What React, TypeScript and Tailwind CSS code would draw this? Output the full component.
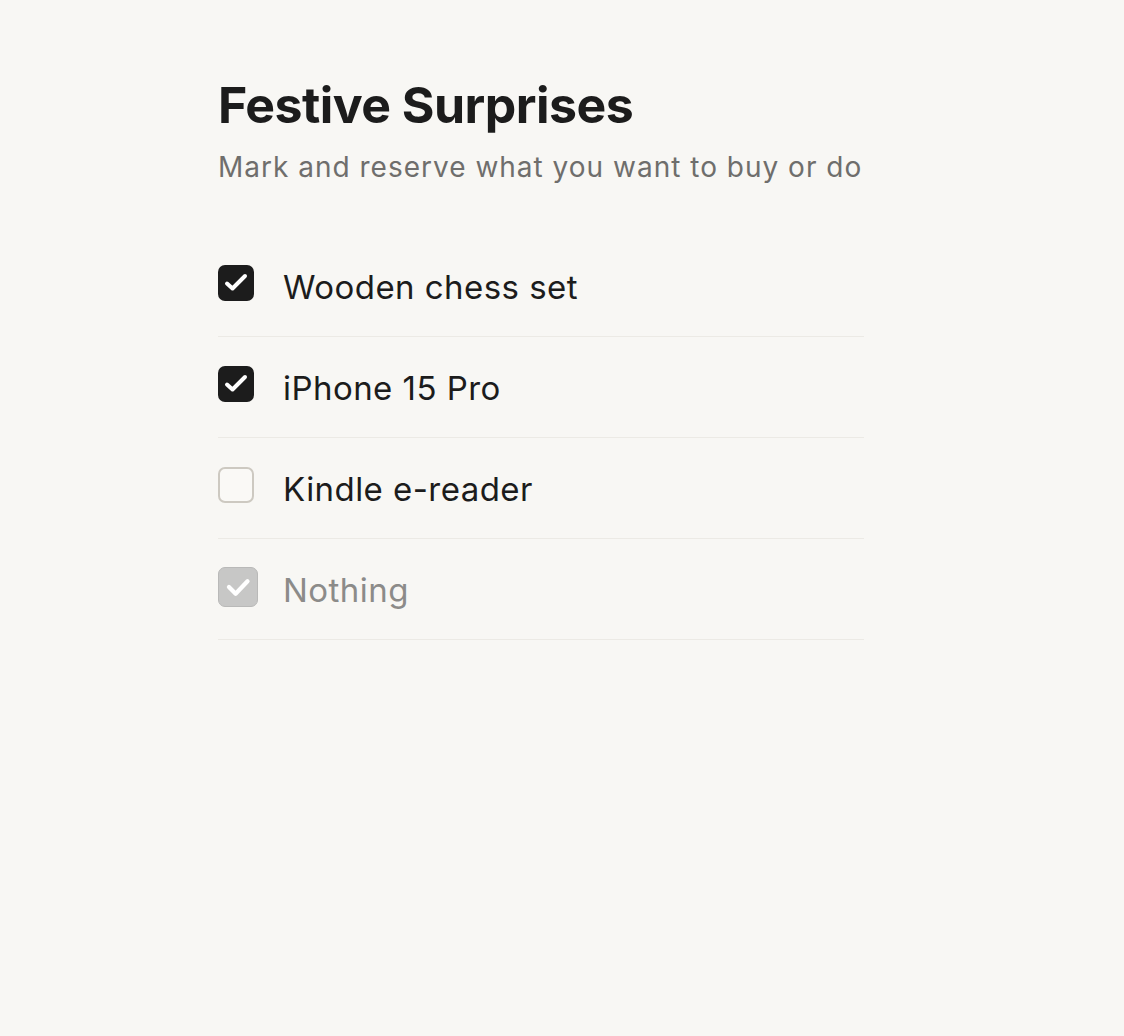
import React from "react";

type Item = { label: string; state: "checked" | "unchecked" | "disabled" };

const items: Item[] = [
  { label: "Wooden chess set", state: "checked" },
  { label: "iPhone 15 Pro", state: "checked" },
  { label: "Kindle e-reader", state: "unchecked" },
  { label: "Nothing", state: "disabled" },
];

function Box({ state }: { state: Item["state"] }) {
  if (state === "checked") {
    return (
      <div className="w-[36px] h-[36px] rounded-[7px] bg-[#1c1c1c] flex items-center justify-center shrink-0">
        <svg width="36" height="36" viewBox="0 0 36 36" fill="none">
          <path d="M9 18.5 L14.5 23.5 L27 11" stroke="#ffffff" strokeWidth="4" strokeLinecap="round" strokeLinejoin="round" />
        </svg>
      </div>
    );
  }
  if (state === "unchecked") {
    return <div className="w-[36px] h-[36px] rounded-[7px] border-2 border-[#cdc9c1] bg-[#faf9f6] shrink-0" />;
  }
  return (
    <div className="w-[40px] h-[40px] mt-[2px] rounded-[7px] bg-[#c7c7c6] border border-[#b9b9b8] flex items-center justify-center shrink-0 -mr-[4px]">
      <svg width="40" height="40" viewBox="0 0 40 40" fill="none">
        <path d="M10.5 20 L17.5 27 L30 14" stroke="#ffffff" strokeWidth="4.5" strokeLinecap="round" strokeLinejoin="round" />
      </svg>
    </div>
  );
}

export default function App() {
  return (
    <div
      className="min-h-[1036px] w-full bg-[#f8f7f4] pl-[218px] pt-[81px]"
      style={{ fontFamily: "Inter, 'Liberation Sans', sans-serif" }}
    >
      <div className="w-[646px]">
        <h1 className="text-[50px] leading-[48px] font-bold text-[#1c1c1c] tracking-[-0.55px]">
          Festive Surprises
        </h1>
        <p className="mt-[20px] text-[28px] leading-[36px] text-[#6f6e6c] tracking-[1px]">
          Mark and reserve what you want to buy or do
        </p>
        <div className="mt-[51px]">
          {items.map((it) => (
            <div
              key={it.label}
              className="flex items-center h-[101px] pb-[6px] border-b border-[#eceae5]"
            >
              <Box state={it.state} />
              <span
                className={
                  "ml-[29px] mt-[8px] text-[33px] leading-[40px] tracking-[0.45px] " +
                  (it.state === "disabled" ? "text-[#8c8b89]" : "text-[#1c1c1c]")
                }
              >
                {it.label}
              </span>
            </div>
          ))}
        </div>
      </div>
    </div>
  );
}
